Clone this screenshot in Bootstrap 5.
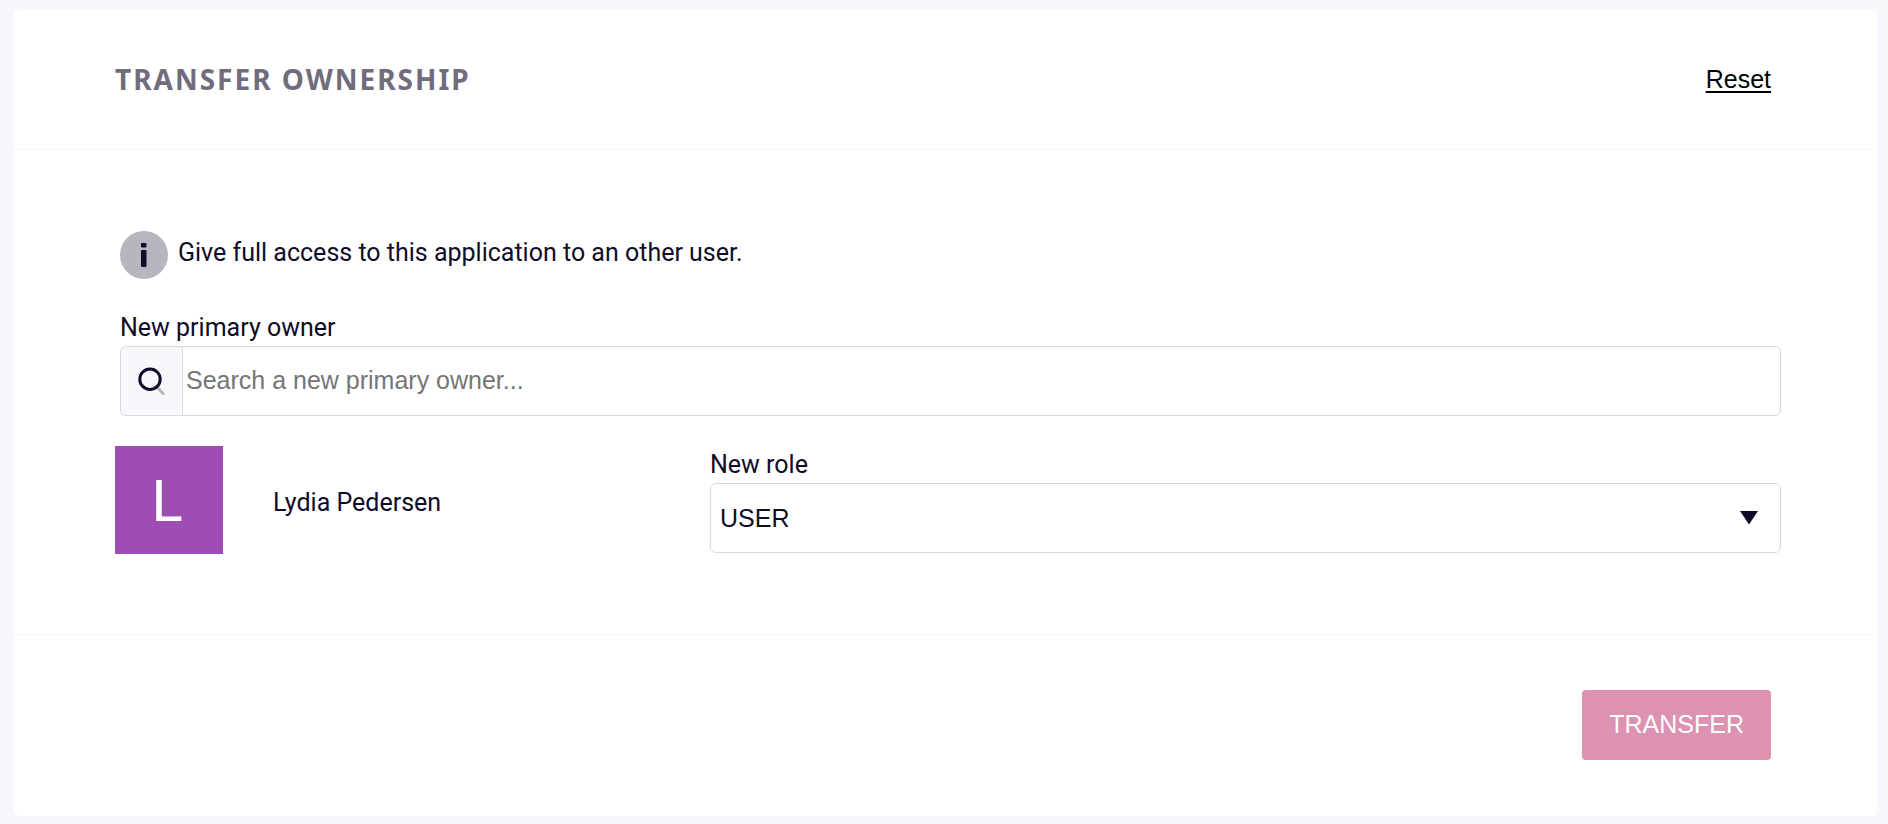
<!DOCTYPE html>
<html lang="en">
<head>
<meta charset="utf-8">
<meta name="viewport" content="width=device-width, initial-scale=1">
<title>Transfer ownership</title>
<link href="https://cdn.jsdelivr.net/npm/bootstrap@5.3.0/dist/css/bootstrap.min.css" rel="stylesheet">
<style>
  :root { --ink: #100c27; --line: #d9d9d9; --canvas: #f7f8fe; }
  body { background: var(--canvas); color: var(--ink); font: 25px/34px Roboto, "Noto Sans", sans-serif; padding: 9px 11px 8px 14px; }
  .panel { --bs-card-border-width: 0; --bs-card-border-radius: 7px; --bs-card-inner-border-radius: 7px; --bs-card-bg: #fff; color: var(--ink); }
  .panel-head { height: 141px; padding: 0 106px 0 101px; border-bottom: 1px solid #f8f8f9; background: none; }
  .panel-title { font: 700 28px/36px "Noto Sans", sans-serif; letter-spacing: 2px; color: #706c7d; margin: 0; }
  .control-font { font-family: "Liberation Sans", Arial, sans-serif; font-size: 25px; line-height: 34px; }
  .reset-link { color: #000; text-underline-offset: 3px; text-decoration-thickness: 2px; }
  .panel-main { padding: 81px 96px 80px 101px; }
  .inset { margin-left: 5px; }
  .info-dot { width: 48px; height: 48px; flex: none; }
  .hint { gap: 10px; margin-bottom: 32px; }
  .hint p { margin: 0 0 5px; }
  .field-label { display: block; margin: 0 0 1px; }
  .search-group { height: 70px; }
  .search-addon { width: 63px; padding: 0 2px 0 0; justify-content: center; background: var(--canvas); border: 1px solid var(--line); border-radius: 6px; }
  .search-box, .role-box { height: 70px; border: 1px solid var(--line); border-radius: 6px; color: var(--ink); background-color: #fff; }
  .search-box { padding: 0 3px 2px; }
  .search-box::placeholder { color: #757575; }
  .member-row { display: grid; grid-template-columns: 5fr 9fr; margin-top: 30px; }
  .member { gap: 50px; }
  .member-name { padding-top: 6px; }
  .role-field { padding-top: 2px; }
  .avatar { width: 108px; height: 108px; flex: none; background: #9d4db4; color: #fff; font-size: 58px; line-height: 110px; padding-right: 4px; text-align: center; }
  .role-box { padding: 0 60px 0 9px; background-position: right 22px center; background-size: 18px 14px;
    background-image: url("data:image/svg+xml,%3Csvg xmlns='http://www.w3.org/2000/svg' viewBox='0 0 18 14'%3E%3Cpath fill='%23100c27' d='M0 0h18L9 13.5z'/%3E%3C/svg%3E"); }
  .panel-foot { height: 182px; padding: 0 106px 2px 101px; border-top: 1px solid var(--canvas); background: none; }
  .transfer-btn { height: 70px; padding: 0 27px 2px; border: 0; border-radius: 4px; color: #fff; background: #dc92b0; }
  .transfer-btn:disabled { color: #fff; background: #dc92b0; opacity: 1; }
</style>
</head>
<body>
<main class="card panel">
  <header class="card-header panel-head d-flex align-items-center justify-content-between">
    <h1 class="panel-title text-uppercase">Transfer ownership</h1>
    <a href="#" class="reset-link control-font">Reset</a>
  </header>
  <form id="transfer-form" class="card-body panel-main">
    <div class="hint inset d-flex align-items-center">
      <svg class="info-dot" viewBox="0 0 48 48" aria-hidden="true">
        <circle cx="24" cy="24" r="24" fill="#b7b5bd"/>
        <rect x="21" y="12" width="5.500" height="4.500" rx="1" fill="#100c27"/>
        <rect x="21" y="19" width="5.500" height="17" rx="1" fill="#100c27"/>
      </svg>
      <p>Give full access to this application to an other user.</p>
    </div>
    <div class="inset">
      <label class="field-label" for="owner">New primary owner</label>
      <div class="input-group search-group">
        <span class="input-group-text search-addon">
          <svg width="32" height="32" viewBox="0 0 32 32" fill="none" aria-hidden="true">
            <path d="M22.500 22.500l5.500 6" stroke="#b7b5bd" stroke-width="3" stroke-linecap="round"/>
            <circle cx="15" cy="14.200" r="10.200" stroke="#100c27" stroke-width="3"/>
          </svg>
        </span>
        <input id="owner" type="text" class="form-control search-box control-font" placeholder="Search a new primary owner...">
      </div>
    </div>
    <div class="member-row">
      <div class="member d-flex align-items-center">
        <div class="avatar" aria-hidden="true">L</div>
        <span class="member-name">Lydia Pedersen</span>
      </div>
      <div class="role-field">
        <label class="field-label" for="role">New role</label>
        <select id="role" class="form-select role-box control-font">
          <option>USER</option>
          <option>OWNER</option>
        </select>
      </div>
    </div>
  </form>
  <footer class="card-footer panel-foot d-flex align-items-center justify-content-end">
    <button type="submit" form="transfer-form" class="btn transfer-btn control-font" disabled>TRANSFER</button>
  </footer>
</main>
<script src="https://cdn.jsdelivr.net/npm/bootstrap@5.3.0/dist/js/bootstrap.bundle.min.js"></script>
</body>
</html>
